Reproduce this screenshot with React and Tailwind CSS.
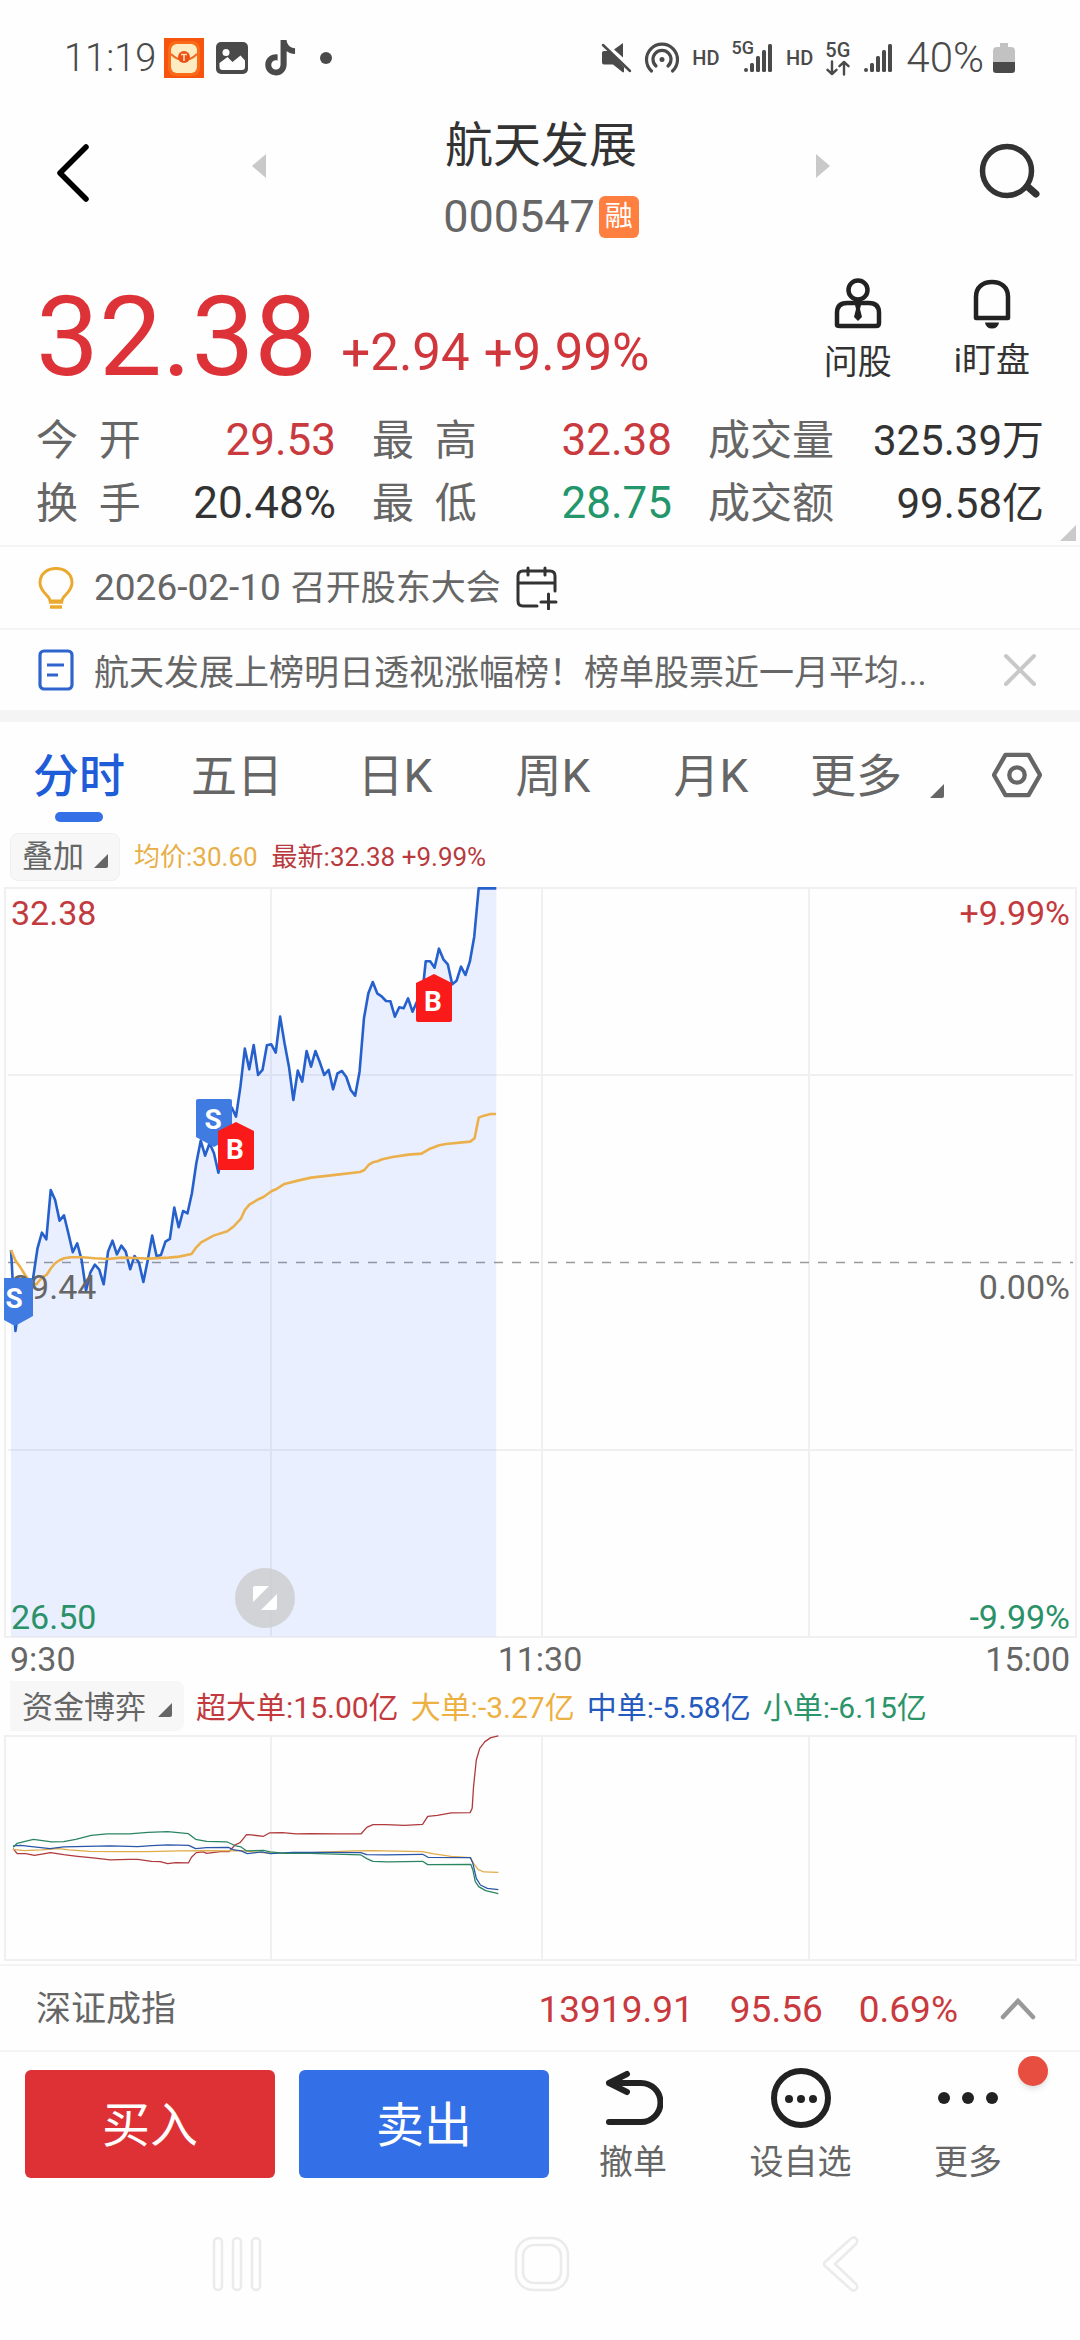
import { useState } from 'react'

const STATS = [
  [
    { label: '今\u00a0\u00a0开', value: '29.53', color: 'text-[#c93a3e]', size: 'text-[44px]' },
    { label: '最\u00a0\u00a0高', value: '32.38', color: 'text-[#c93a3e]', size: 'text-[44px]' },
    { label: '成交量', value: '325.39万', color: 'text-[#333333]', size: 'text-[42px]' },
  ],
  [
    { label: '换\u00a0\u00a0手', value: '20.48%', color: 'text-[#333333]', size: 'text-[44px]' },
    { label: '最\u00a0\u00a0低', value: '28.75', color: 'text-[#23966b]', size: 'text-[44px]' },
    { label: '成交额', value: '99.58亿', color: 'text-[#333333]', size: 'text-[42px]' },
  ],
]

const TABS = ['分时', '五日', '日K', '周K', '月K']

// one reading per minute from 9:30, measured down from the top of the plot
const PRICE = [
  1140, 1383, 1290, 1300, 1330, 1225, 1135, 1088, 1108, 960, 990, 1052, 1036, 1090, 1147, 1120, 1170, 1262, 1207, 1184,
  1199, 1243, 1145, 1112, 1153, 1127, 1145, 1198, 1158, 1178, 1236, 1170, 1097, 1159, 1155, 1115, 1107, 1013, 1072, 1023,
  1030, 970, 880, 812, 857, 820, 850, 908, 840, 740, 712, 740, 650, 536, 598, 525, 615, 600, 526, 523,
  548, 440, 520, 590, 690, 602, 635, 543, 590, 543, 577, 615, 600, 658, 610, 603, 621, 660, 677, 605,
  445, 370, 336, 370, 379, 393, 394, 440, 412, 415, 385, 425, 395, 400, 274, 274, 293, 236, 268, 283,
  343, 332, 290, 315, 275, 200, 55, 55, 55, 55, 55,
]
const PRICE_POINTS = PRICE.map((y, i) => `${(32 + i * 12.81).toFixed(1)},${y}`).join(' ')

const AVERAGE_POINTS =
  '32,1140 45,1172 58,1190 73,1215 90,1240 106,1243 122,1222 135,1215 148,1195 160,1180 173,1171 186,1165 205,1162 240,1162 275,1165 315,1167 352,1163 390,1164 430,1166 490,1163 520,1160 556,1152 570,1132 584,1117 620,1097 660,1084 680,1068 699,1047 711,1020 724,1004 750,988 765,981 788,964 801,958 826,942 865,932 903,923 980,914 1045,906 1058,900 1070,885 1083,877 1096,874 1110,868 1140,861 1186,854 1224,851 1245,838 1275,826 1295,822 1365,815 1378,805 1390,743 1405,737 1425,732 1440,732'

const FLOWS = [
  {
    label: '超大单:15.00亿', text: 'text-[#c23a3e]', stroke: '#b03a3c',
    points: '38,866 50,881 75,881 100,886 147,878 185,884 225,889 270,894 320,900 375,898 400,898 440,904 465,905 487,911 510,908 547,909 556,892 570,878 590,876 600,880 640,875 665,875 682,855 697,848 716,824 730,825 765,829 782,819 820,818 860,822 900,821 980,822 1048,822 1065,802 1083,794 1120,794 1175,796 1227,793 1242,769 1270,766 1310,759 1365,758 1371,745 1375,680 1383,600 1393,565 1408,545 1425,533 1447,528',
  },
  {
    label: '大单:-3.27亿', text: 'text-[#edb043]', stroke: '#e0ab4a',
    points: '38,868 70,872 120,870 170,866 200,870 260,874 340,875 430,875 520,873 600,872 665,873 700,872 760,878 820,880 900,878 1030,873 1080,872 1227,875 1260,882 1310,889 1366,893 1375,910 1388,928 1405,936 1447,937',
  },
  {
    label: '中单:-5.58亿', text: 'text-[#2459bd]', stroke: '#2a55a8',
    points: '38,858 60,856 145,866 185,861 250,859 320,858 400,860 440,857 487,855 548,856 568,866 600,863 663,862 680,870 700,873 718,881 760,876 785,881 850,877 930,877 1048,878 1065,884 1120,885 1227,883 1243,892 1366,893 1373,910 1383,955 1395,975 1415,985 1447,989',
  },
  {
    label: '小单:-6.15亿', text: 'text-[#2b9468]', stroke: '#2c8562',
    points: '38,862 50,850 70,845 97,838 150,846 185,845 220,838 265,826 310,822 375,822 430,817 487,815 547,821 568,838 600,844 660,846 685,858 700,861 716,873 765,871 785,876 830,880 900,880 1048,885 1065,896 1083,904 1125,906 1227,904 1242,914 1367,913 1373,930 1380,965 1390,980 1410,992 1447,1001',
  },
]

function Signal() {
  return (
    <svg className="h-8 w-8" viewBox="0 0 32 32" fill="#4a4a4a">
      <circle cx="4" cy="28" r="2" />
      <rect x="8" y="21" width="4" height="9" rx="1.5" />
      <rect x="14" y="14" width="4" height="16" rx="1.5" />
      <rect x="20" y="8" width="4" height="22" rx="1.5" />
      <rect x="26" y="2" width="4" height="28" rx="1.5" />
    </svg>
  )
}

function StatusBar() {
  return (
    <div className="flex items-center justify-between px-16 pt-[38px] text-[#4a4a4a]">
      <div className="flex h-10 items-center">
        <span className="text-[38px] font-light leading-10">11:19</span>
        <svg className="ml-2 h-10 w-10" viewBox="0 0 40 40">
          <rect width="40" height="40" fill="#f8540f" />
          <rect x="4" y="3" width="32" height="35" rx="8" fill="#fb7b1c" opacity=".6" />
          <rect x="7" y="6" width="26" height="29" rx="6" fill="#fdebc2" />
          <path d="M7 16 Q13 22 20 22 Q27 22 33 16" fill="none" stroke="#ef6a22" strokeWidth="2" />
          <circle cx="20" cy="19" r="6" fill="#e9501a" />
          <path d="M17 16.500h6M20 17v6" stroke="#fdd9a8" strokeWidth="1.600" />
        </svg>
        <svg className="ml-3 h-8 w-8" viewBox="0 0 32 32">
          <rect width="32" height="32" rx="5" fill="#4a4a4a" />
          <circle cx="10" cy="10.500" r="3.500" fill="#fff" />
          <path d="M3.500 25v-4l8-6 5 5 8-6.500 4.500 5V25q0 3-3 3H6.500q-3 0-3-3z" fill="#fff" />
        </svg>
        <svg className="ml-4 h-9 w-8" viewBox="0 0 28 33" fill="#4a4a4a">
          <path d="M14.500 0h5.500c.4 4.200 3.200 7.200 7.800 7.600v5.200c-3 0-5.600-.9-7.700-2.400v11.800c0 6-4.300 10.300-9.900 10.300C4.600 32.500.5 28.300.5 22.800c0-6 5-10.300 11.300-9.600v5.500c-3.200-.8-5.800 1.200-5.800 4 0 2.500 1.900 4.400 4.200 4.400 2.500 0 4.300-1.800 4.300-4.900z" />
        </svg>
        <span className="ml-6 h-3 w-3 rounded-full bg-[#4a4a4a]" />
      </div>
      <div className="flex h-10 items-center">
        <svg className="h-8 w-8" viewBox="0 0 32 32" fill="#4a4a4a">
          <path d="M2 11q0-2 2-2h5L24 25v5l-1 .5-10-8H4q-2 0-2-2z" />
          <path d="M14 7.500L23 1v14.500z" />
          <path d="M3 3l27 26" stroke="#4a4a4a" strokeWidth="2.500" strokeLinecap="round" />
        </svg>
        <svg className="ml-3 h-9 w-9" viewBox="0 0 36 36" fill="none" stroke="#4a4a4a" strokeWidth="3.200" strokeLinecap="round">
          <path d="M7.500 31A15.500 15.500 0 1 1 28.500 31" />
          <path d="M12 26A9 9 0 1 1 24 26" />
          <circle cx="18" cy="19.500" r="2.500" fill="#4a4a4a" stroke="none" />
        </svg>
        <span className="ml-3 text-[20px] font-medium leading-5">HD</span>
        <span className="ml-3 flex">
          <span className="-mt-1 -mr-3 text-[18px] font-medium leading-5">5G</span>
          <Signal />
        </span>
        <span className="ml-3 text-[20px] font-medium leading-5">HD</span>
        <span className="ml-3 flex flex-col items-center">
          <span className="text-[20px] font-medium leading-5">5G</span>
          <svg className="h-4 w-6" viewBox="0 0 24 16" fill="none" stroke="#4a4a4a" strokeWidth="2.400" strokeLinecap="round" strokeLinejoin="round">
            <path d="M6 1.500v12.500M1.500 9.800L6 14l4.500-4.200M18 14.500V2M13.500 6.200L18 2l4.500 4.200" />
          </svg>
        </span>
        <span className="ml-3"><Signal /></span>
        <span className="ml-3 text-[42px] font-light leading-10">40%</span>
        <svg className="ml-2 h-8 w-6" viewBox="0 0 24 32">
          <path d="M8 1h8v4h3q4 0 4 4v12H1V9q0-4 4-4h3z" fill="#c2c2c2" />
          <path d="M1 20h22v8q0 3-3 3H4q-3 0-3-3z" fill="#4a4a4a" />
        </svg>
      </div>
    </div>
  )
}

function Header() {
  return (
    <header className="mt-8 flex h-[146px] items-start justify-between pl-[52px] pr-[38px]">
      <button aria-label="返回" className="mt-8 pr-3">
        <svg className="h-[62px] w-10" viewBox="0 0 40 62" fill="none" stroke="#000" strokeWidth="5.500" strokeLinecap="round" strokeLinejoin="round">
          <path d="M34 5L8 31l26 26" />
        </svg>
      </button>
      <div className="flex items-start gap-[176px]">
        <button aria-label="上一只" className="mt-11">
          <svg className="h-6 w-4" viewBox="0 0 16 24" fill="#c9c9c9"><path d="M15 0v24L1 12z" /></svg>
        </button>
        <div className="flex flex-col items-center">
          <h1 className="text-[48px] leading-[72px] text-[#333333]">航天发展</h1>
          <div className="flex items-center gap-1">
            <span className="text-[45px] leading-[70px] text-[#666666]">000547</span>
            <span className="flex h-[42px] w-10 items-center justify-center rounded-md bg-[#ff7f40] text-[28px] leading-10 text-white">融</span>
          </div>
        </div>
        <button aria-label="下一只" className="mt-11">
          <svg className="h-6 w-4" viewBox="0 0 16 24" fill="#c9c9c9"><path d="M1 0v24l14-12z" /></svg>
        </button>
      </div>
      <button aria-label="搜索" className="mt-8">
        <svg className="h-16 w-16" viewBox="0 0 64 64" fill="none" stroke="#333" strokeWidth="5.500" strokeLinecap="round">
          <circle cx="29" cy="29" r="24.500" />
          <path d="M50 45l8 7" strokeWidth="7" />
        </svg>
      </button>
    </header>
  )
}

function Quote() {
  return (
    <section className="relative border-b-2 border-[#f4f4f4] pb-[10px]">
      <div className="flex items-start justify-between pl-9 pr-[50px]">
        <div className="flex items-end pt-[25px]">
          <span className="text-[112px] leading-[112px] text-[#dd3338]">32.38</span>
          <span className="ml-6 text-[51px] leading-[80px] text-[#cf373c]">+2.94</span>
          <span className="ml-[14px] text-[51px] leading-[80px] text-[#cf373c]">+9.99%</span>
        </div>
        <div className="flex gap-[62px] pt-[22px] text-[34px] leading-[40px] text-[#333333]">
          <button className="flex flex-col items-center gap-3">
            <svg className="h-[52px] w-[50px]" viewBox="0 0 50 52" fill="none" stroke="#222" strokeWidth="4.500">
              <circle cx="25" cy="12" r="9.500" />
              <path d="M4 47V35Q4 25 14 25H36Q46 25 46 35V45Q46 48 43 48H7Q4 48 4 47z" />
              <path d="M22 27h6l-1 4 2 8-4 4-4-4 2-8z" fill="#222" stroke="none" />
            </svg>
            问股
          </button>
          <button className="flex flex-col items-center gap-[10px]">
            <svg className="h-[52px] w-[50px]" viewBox="0 0 50 52" fill="none" stroke="#222" strokeWidth="4.500" strokeLinejoin="round">
              <path d="M9 40V19C9 9 16 4 25 4s16 5 16 15v21z" />
              <path d="M18 44.500h14q-1 6-7 6t-7-6z" fill="#222" stroke="none" />
            </svg>
            i盯盘
          </button>
        </div>
      </div>
      <dl className="mt-4 px-9">
        {STATS.map((row, r) => (
          <div key={r} className="grid grid-cols-3">
            {row.map((s, i) => (
              <div key={s.label} className={`flex justify-between leading-[63px] ${i < 2 ? 'pr-9' : ''}`}>
                <dt className="text-[42px] text-[#666666]">{s.label}</dt>
                <dd className={`${s.size} ${s.color}`}>{s.value}</dd>
              </div>
            ))}
          </div>
        ))}
      </dl>
      <svg className="absolute right-1 bottom-1 h-4 w-4" viewBox="0 0 16 16" fill="#cacaca"><path d="M16 0v16H0z" /></svg>
    </section>
  )
}

function Notices() {
  return (
    <section className="text-[35px] text-[#666666]">
      <div className="flex h-[83px] items-center border-b-2 border-[#f4f4f4] pl-9">
        <svg className="h-11 w-10" viewBox="0 0 40 44" fill="none" stroke="#eaa92f" strokeWidth="3">
          <path d="M14 35c0-6-10-8-10-18.500C4 8 11 2.500 20 2.500S36 8 36 16.500C36 27 26 29 26 35z" strokeLinejoin="round" />
          <path d="M13 36h14M14 41h12" strokeWidth="3.500" />
        </svg>
        <span className="ml-[18px] flex items-baseline gap-[10px]"><span className="text-[37px]">2026-02-10</span>召开股东大会</span>
        <button aria-label="加入日历" className="ml-[14px]">
          <svg className="h-11 w-11" viewBox="0 0 44 44" fill="none" stroke="#333" strokeWidth="3" strokeLinecap="round">
            <path d="M22 40H8q-5 0-5-5V10q0-5 5-5h27q5 0 5 5v15M3 17h37M13 2v7M30 2v7" />
            <path d="M26 36h15M33.500 28v15" />
          </svg>
        </button>
      </div>
      <div className="flex h-20 items-center pl-9 pr-[42px]">
        <svg className="h-11 w-10 shrink-0" viewBox="0 0 40 44" fill="none" stroke="#2f64cc" strokeWidth="3.200">
          <rect x="4" y="3" width="32" height="38" rx="4" />
          <path d="M11 17h17M11 27h11" />
        </svg>
        <a href="#news" className="ml-[18px] min-w-0 truncate pt-2">航天发展上榜明日透视涨幅榜！榜单股票近一月平均...</a>
        <button aria-label="关闭" className="ml-auto">
          <svg className="h-9 w-9" viewBox="0 0 36 36" stroke="#c8c8c8" strokeWidth="4" strokeLinecap="round">
            <path d="M4 4l28 28M32 4L4 32" />
          </svg>
        </button>
      </div>
      <div className="h-3 bg-[#f4f4f4]" />
    </section>
  )
}

function Corner({ className }) {
  return <svg className={className} viewBox="0 0 14 14" fill="#666"><path d="M14 0v12q0 2-2 2H0z" /></svg>
}

function Tabs({ active, onSelect }) {
  return (
    <nav className="flex items-start pr-[38px] text-[46px] leading-[68px] text-[#666666]">
      {TABS.map(t => (
        <button key={t} onClick={() => onSelect(t)}
          className={`flex flex-1 flex-col items-center pt-5 ${t === active ? 'font-medium text-[#1f5cd8]' : ''}`}>
          {t}
          <span className={`mt-[2px] h-[10px] w-12 rounded-full ${t === active ? 'bg-[#3570e6]' : ''}`} />
        </button>
      ))}
      <button className="ml-5 flex items-end gap-7 pt-5">
        更多
        <Corner className="mb-3 h-[14px] w-[14px]" />
      </button>
      <button aria-label="设置" className="ml-12 pt-7">
        <svg className="h-[50px] w-[50px]" viewBox="0 0 52 50" fill="none" stroke="#666" strokeWidth="4.500" strokeLinejoin="round">
          <path d="M14 4h24l12 21-12 21H14L2 25z" />
          <circle cx="26" cy="25" r="8" />
        </svg>
      </button>
    </nav>
  )
}

function Marker({ x, y, type }) {
  const buy = type === 'B'
  return (
    <g transform={`translate(${x} ${y})`}>
      <path d={buy ? 'M0 9L18 0L36 9V46Q36 48 34 48H2Q0 48 0 46Z' : 'M0 2Q0 0 2 0H34Q36 0 36 2V38L18 48L0 38Z'} fill={buy ? '#fb1a1a' : '#3f7be0'} />
      <text x="17" y={buy ? 37 : 30} fontSize="28" fontWeight="700" fill="#fff" textAnchor="middle">{type}</text>
    </g>
  )
}

function PriceChart() {
  return (
    <svg className="block w-full" viewBox="0 0 1080 752" fontSize="34">
      <g fill="none" stroke="#f0f0f0" strokeWidth="2">
        <rect x="5" y="1" width="1071" height="749" />
        <path d="M271 1V750M542 1V750M809 1V750M8 188H1073M8 563H1073" />
      </g>
      <path d="M8 375.500H1073" stroke="#9a9a9a" strokeWidth="1.500" strokeDasharray="9 9" />
      <g transform="translate(0 -17) scale(.3444 .3333)" fill="none" strokeLinejoin="round">
        <polygon points={`32,2300 ${PRICE_POINTS} 1441,2300`} fill="#2f6bff" fillOpacity=".1" />
        <polyline points={PRICE_POINTS} stroke="#2560cc" strokeWidth="2.600" vectorEffect="non-scaling-stroke" />
        <polyline points={AVERAGE_POINTS} stroke="#ebb04c" strokeWidth="2.600" vectorEffect="non-scaling-stroke" />
      </g>
      <g>
        <text x="11" y="38" fill="#c23a3e">32.38</text>
        <text x="11" y="412" fill="#666">29.44</text>
        <text x="11" y="742" fill="#2a9168">26.50</text>
      </g>
      <g textAnchor="end">
        <text x="1070" y="38" fill="#c23a3e">+9.99%</text>
        <text x="1070" y="412" fill="#666">0.00%</text>
        <text x="1070" y="742" fill="#2a9168">-9.99%</text>
      </g>
      <clipPath id="plot"><rect x="4" y="0" width="1072" height="752" /></clipPath>
      <g clipPath="url(#plot)">
        <Marker x={-3} y={391} type="S" />
        <Marker x={196} y={212} type="S" />
        <Marker x={218} y={235} type="B" />
        <Marker x={416} y={87} type="B" />
      </g>
      <circle cx="265" cy="711" r="30" fill="#c9c9c9" fillOpacity=".75" />
      <path d="M255 699h14l-16 16v-14q0-2 2-2zM277 707v14q0 2-2 2h-14z" fill="#fff" />
    </svg>
  )
}

function FlowChart() {
  return (
    <svg className="block w-full" viewBox="0 0 1080 227">
      <g fill="none" stroke="#f0f0f0" strokeWidth="2">
        <rect x="5" y="1" width="1071" height="224" />
        <path d="M271 1V225M542 1V225M809 1V225" />
      </g>
      <g transform="translate(0 -175) scale(.3444 .3333)" fill="none" strokeLinejoin="round">
        {FLOWS.map(f => (
          <polyline key={f.label} points={f.points} stroke={f.stroke} strokeWidth="1.300" vectorEffect="non-scaling-stroke" />
        ))}
      </g>
    </svg>
  )
}

function Action({ label, children }) {
  return (
    <button className="flex flex-col items-center text-[34px] leading-[40px] text-[#666666]">
      {children}
      <span className="mt-[14px]">{label}</span>
    </button>
  )
}

export default function App() {
  const [tab, setTab] = useState('分时')

  return (
    <div className="flex min-h-screen flex-col bg-[#fefefe] font-['Roboto','Noto_Sans_CJK_SC',sans-serif]">
      <StatusBar />
      <Header />
      <Quote />
      <Notices />
      <Tabs active={tab} onSelect={setTab} />

      <div className="mt-[11px] flex items-center px-[10px] text-[26px]">
        <button className="flex h-12 items-center gap-[10px] rounded-lg border border-[#f0f0f0] bg-[#f7f7f7] px-[11px] text-[31px] leading-[44px] text-[#666666]">
          叠加
          <Corner className="mt-2 h-[14px] w-[14px]" />
        </button>
        <span className="ml-[14px] text-[#e8ae47]">均价:30.60</span>
        <span className="ml-[14px] text-[#b93a3e]">最新:32.38 +9.99%</span>
      </div>
      <div className="mt-[6px]"><PriceChart /></div>
      <div className="grid grid-cols-3 px-[10px] text-[34px] leading-10 text-[#666666]">
        <span>9:30</span>
        <span className="text-center">11:30</span>
        <span className="text-right">15:00</span>
      </div>

      <div className="mt-[2px] flex items-center gap-3 px-[10px] text-[30px]">
        <button className="flex h-[50px] items-center gap-3 rounded-r-lg bg-[#f7f7f7] px-3 pt-1 text-[31px] leading-[46px] text-[#666666]">
          资金博弈
          <Corner className="mt-1 h-[14px] w-[14px]" />
        </button>
        {FLOWS.map(f => <span key={f.label} className={`pt-[2px] ${f.text}`}>{f.label}</span>)}
      </div>
      <div className="mt-1"><FlowChart /></div>

      <div className="mt-[2px] flex h-[88px] items-center border-y-2 border-[#f4f4f4] pt-1 pl-9 pr-[42px] text-[37px] text-[#c93a3e]">
        <span className="text-[35px] text-[#666666]">深证成指</span>
        <span className="ml-auto">13919.91</span>
        <span className="ml-9">95.56</span>
        <span className="ml-9">0.69%</span>
        <button aria-label="展开" className="ml-10">
          <svg className="h-6 w-10" viewBox="0 0 40 24" fill="none" stroke="#999" strokeWidth="4.500" strokeLinecap="round">
            <path d="M5 19L20 3l15 16" />
          </svg>
        </button>
      </div>

      <div className="relative flex items-start pt-4 pl-[25px] pr-[78px]">
        <button className="mt-[2px] h-[108px] w-[250px] rounded-md bg-[#de3136] pt-1 text-[48px] text-white">买入</button>
        <button className="mt-[2px] ml-6 h-[108px] w-[250px] rounded-md bg-[#336fe6] pt-1 text-[48px] text-white">卖出</button>
        <div className="ml-[50px] flex flex-1 justify-between">
          <Action label="撤单">
            <svg className="h-[60px] w-[60px]" viewBox="0 0 60 60" fill="none" stroke="#222" strokeWidth="6" strokeLinecap="round" strokeLinejoin="round">
              <path d="M6 54H38A19.500 19.500 0 0 0 38 15H6M24 6L6 15l18 9" />
            </svg>
          </Action>
          <Action label="设自选">
            <svg className="h-[60px] w-[62px]" viewBox="0 0 62 60" fill="#222">
              <circle cx="31" cy="30" r="27" fill="none" stroke="#222" strokeWidth="6" />
              <circle cx="19" cy="31" r="4" /><circle cx="31" cy="31" r="4" /><circle cx="43" cy="31" r="4" />
            </svg>
          </Action>
          <Action label="更多">
            <svg className="h-[60px] w-[60px]" viewBox="0 0 60 60" fill="#222">
              <circle cx="6" cy="30" r="6" /><circle cx="30" cy="30" r="6" /><circle cx="54" cy="30" r="6" />
            </svg>
          </Action>
        </div>
        <span className="absolute top-1 right-8 h-[30px] w-[30px] rounded-full bg-[#e74e3f] shadow-md" />
      </div>

      <div className="mt-[54px] flex items-center justify-between pl-[212px] pr-[220px]">
        <svg className="h-14 w-[52px]" viewBox="0 0 52 56" fill="none" stroke="#ebebeb" strokeWidth="2.500">
          <rect x="2" y="2" width="8" height="52" rx="4" /><rect x="21" y="2" width="8" height="52" rx="4" /><rect x="40" y="2" width="8" height="52" rx="4" />
        </svg>
        <svg className="h-14 w-14" viewBox="0 0 56 56" fill="none" stroke="#ebebeb" strokeWidth="2.500">
          <rect x="2" y="2" width="52" height="52" rx="17" /><rect x="9" y="9" width="38" height="38" rx="11" />
        </svg>
        <svg className="h-14 w-10" viewBox="0 0 40 56" fill="none" stroke="#ebebeb" strokeWidth="2.500" strokeLinejoin="round">
          <path d="M31 2.500Q34 0 36.500 3 38 5.500 36 8L15 28l21 20q2 2.500.5 5-2.500 3-5.500.5L5 30q-2-2 0-4z" />
        </svg>
      </div>
    </div>
  )
}
